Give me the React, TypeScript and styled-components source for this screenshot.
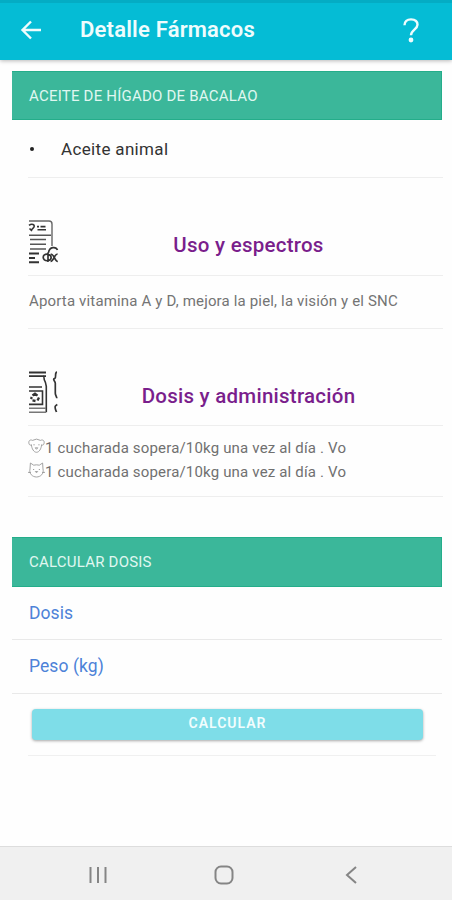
import React from "react";
import styled, { createGlobalStyle } from "styled-components";

const GlobalStyle = createGlobalStyle`
  * { box-sizing: border-box; }
  body { margin: 0; background: #fff; font-family: Roboto, "Liberation Sans", sans-serif; }
`;

const Screen = styled.div`
  width: 452px;
  height: 900px;
  display: flex;
  flex-direction: column;
  background: #fefefe;
  overflow: hidden;
`;

const Header = styled.header`
  height: 60px;
  flex: none;
  display: flex;
  align-items: center;
  padding: 0 32px 4px 20px;
  border-top: 3px solid #04acc4;
  background: #05bcd5;
  box-shadow: 0 1px 4px rgba(0, 0, 0, 0.28);
  color: #effcfd;
`;

const Title = styled.h1`
  flex: 1;
  margin: 0 0 0 38px;
  font-size: 22px;
  line-height: 28px;
  font-weight: 600;
  letter-spacing: 0.2px;
`;

const Content = styled.main`
  flex: 1;
  display: flex;
  flex-direction: column;
  padding: 11px 10px 0 12px;
`;

const Banner = styled.div<{ $tall?: boolean }>`
  height: ${(p) => (p.$tall ? 50 : 49)}px;
  display: flex;
  align-items: center;
  padding-left: 17px;
  border: 1px solid #24ad8a;
  border-left-width: 0;
  background: #3bb79a;
  color: #e0f7f1;
  font-size: 15px;
  letter-spacing: 0.22px;
`;

const Row = styled.div<{ $height: number }>`
  height: ${(p) => p.$height}px;
  margin: 0 -1px 0 16px;
  display: flex;
  align-items: center;
  border-bottom: 1px solid #eeeeee;
`;

const Bullet = styled.span`
  width: 4px;
  height: 4px;
  margin: 0 27px 0 2px;
  border-radius: 50%;
  background: #222;
`;

const DrugType = styled.span`
  color: #333;
  font-size: 17px;
  letter-spacing: 0.34px;
`;

const SectionHead = styled(Row)`
  align-items: flex-start;
  padding-top: 41px;
`;

const SectionTitle = styled.h2`
  flex: 1;
  margin: 12px 6px 0 0;
  text-align: center;
  color: #7a1e8c;
  font-size: 20.5px;
  line-height: 28px;
  font-weight: 500;
  letter-spacing: 0.25px;
`;

const Note = styled.p`
  margin: -2px 0 0 1px;
  color: #747474;
  font-size: 15px;
  letter-spacing: 0.16px;
`;

const DoseList = styled(Row)`
  flex-direction: column;
  align-items: flex-start;
  justify-content: flex-start;
  padding-top: 10px;
`;

const Dose = styled.div`
  height: 24px;
  display: flex;
  align-items: center;
  color: #707070;
  font-size: 15px;
  letter-spacing: 0.17px;
`;

const Calculator = styled.form`
  margin: 40px 0 0;
`;

const Field = styled.label<{ $height: number }>`
  height: ${(p) => p.$height}px;
  display: flex;
  align-items: center;
  padding: 0 0 1px 17px;
  border-bottom: 1px solid #e9e9e9;
  color: #4d82d8;
  font-size: 17.5px;
  letter-spacing: 0.08px;
`;

const ButtonRow = styled.div`
  height: 62px;
  margin: 0 6px 0 16px;
  padding: 15px 13px 0 4px;
  border-bottom: 1px solid #f0f0f0;
`;

const CalculateButton = styled.button`
  display: block;
  width: 100%;
  height: 31px;
  padding: 0 0 3px;
  border: 0;
  border-radius: 4px;
  background: #7edde8;
  box-shadow: 0 1px 3px rgba(0, 0, 0, 0.35);
  color: #f2fdfe;
  font-family: inherit;
  font-size: 14px;
  font-weight: 600;
  letter-spacing: 1px;
`;

const SystemBar = styled.nav`
  height: 54px;
  flex: none;
  display: flex;
  align-items: center;
  padding: 3px 0 0 87px;
  border-top: 1px solid #dddddd;
  background: #f0f0f0;
`;

const Glyph = styled.svg`
  display: block;
  flex: none;
  fill: none;
  stroke: currentColor;
  overflow: visible;
`;

const SystemGlyph = styled(Glyph)<{ $gap: number }>`
  margin-left: ${(p) => p.$gap}px;
  color: #858585;
  stroke-width: 2;
`;

const SectionGlyph = styled(Glyph)`
  color: #333;
  stroke-width: 1.4;
`;

const PetGlyph = styled(Glyph)`
  width: 17px;
  height: 18px;
  margin-top: -4px;
  color: #999;
  stroke-width: 0.9;
`;

const BackIcon = () => (
  <Glyph width="22" height="20" viewBox="0 0 22 20" strokeWidth="2.4">
    <path d="M21 10H3M11 1.5 2.5 10 11 18.5" />
  </Glyph>
);

const HelpIcon = () => (
  <Glyph width="18" height="24" viewBox="0 0 18 24" strokeWidth="2.4">
    <path d="M2.5 7.2C2.5 3.3 5 1.4 9 1.4c4 0 6.5 2 6.5 5.3 0 4.5-6.5 5.5-6.5 10.5" />
    <circle cx="9" cy="22" r="1.2" fill="currentColor" />
  </Glyph>
);

const ReportIcon = () => (
  <SectionGlyph width="32" height="46" viewBox="0 0 32 46">
    <path d="M1 2h20q3 0 3 3v22" stroke="#666" />
    <path d="M1 16.2h22M2 20.5h16M2 25.2h16M2 30h16" stroke="#555" />
    <path d="M1 34.5h10M1 39h6M1 43.2h10" strokeWidth="1.9" />
    <path d="M1 6.4c3-2.4 6-.8 5 1.6-.6 1.5-2.4 1.5-2.8 4M1.5 9.5 4 12M9 7.6h2M12.5 7.6h5M9.5 10.7H18" strokeWidth="1.6" />
    <path d="M29.5 31c-1.5-3.5-8-3.5-9 2.6M20 33.5v9.5M20 35.2c-6.4-1-6.4 7.2 0 6.5 4.2-.3 4.3-6-.2-6.3M22.8 35c3.5 0 3.8 7.5 7 7.5M29.6 35c-3.5 0-3.8 7.5-7 7.5" strokeWidth="1.7" />
  </SectionGlyph>
);

const MedicineIcon = () => (
  <SectionGlyph width="32" height="46" viewBox="0 0 32 46">
    <path d="M1 2.5h17M1 6.2h17" strokeWidth="1.8" />
    <path d="M15.3 6c1.2 0 .3 3.5 1.4 4.8.8 1 1.3 3.7 1.6 5.5v26M1 17h13" strokeWidth="1.6" />
    <path d="M1 21h13.5v13.4H1" strokeWidth="1.6" />
    <path d="M1 38.2h17M1 42.2h17" stroke="#777" />
    <path d="M4.5 25.5 7 23.6l2.5 2M11 27.5l-1.5 3M7.5 31l-3-.6M3 29l.8-2" strokeWidth="2.3" />
    <path d="M29 2.2c-2.8.3-.3 5.2-2.2 6.2-2.8 1 .5 2.8.5 4.8v10c0 2 1.5 3.5 1.5 5M29.3 34.5c-2.5 1.5-2.4 2-2 4.2.2 1.5 1 2.3 1.2 3.3" strokeWidth="1.7" />
  </SectionGlyph>
);

const DogIcon = () => (
  <PetGlyph viewBox="0 0 17 18">
    <path d="M4.5 3.4q4-2.6 8 0c2.8-1.4 4.5 1 3.3 3.8-.5 1-1.5 1.2-2.2.5-.3 4-2.4 7.6-5.1 7.6S3.7 11.7 3.4 7.7c-.7.7-1.7.5-2.2-.5C0 4.4 1.7 2 4.5 3.4M7.2 10.8h2.6l-1.3 1.5zM5.4 7.8h1.3M10.3 7.8h1.3" />
  </PetGlyph>
);

const CatIcon = () => (
  <PetGlyph viewBox="0 0 17 18">
    <path d="M2 8 2.4 2l3.3 2.2q2.8-.8 5.6 0L14.6 2 15 8c1.1 4.5-2.3 8-6.5 8S.9 12.5 2 8zM7.3 10.5h2.4l-1.2 1.3zM5 8.5h1.2M10.8 8.5H12M0 11.3l3 .4M14 11.7l3-.4" />
  </PetGlyph>
);

export default function App() {
  return (
    <Screen>
      <GlobalStyle />
      <Header>
        <BackIcon />
        <Title>Detalle Fármacos</Title>
        <HelpIcon />
      </Header>
      <Content>
        <Banner>ACEITE DE HÍGADO DE BACALAO</Banner>
        <Row $height={58}>
          <Bullet />
          <DrugType>Aceite animal</DrugType>
        </Row>
        <SectionHead $height={98}>
          <ReportIcon />
          <SectionTitle>Uso y espectros</SectionTitle>
        </SectionHead>
        <Row $height={53}>
          <Note>Aporta vitamina A y D, mejora la piel, la visión y el SNC</Note>
        </Row>
        <SectionHead $height={97}>
          <MedicineIcon />
          <SectionTitle>Dosis y administración</SectionTitle>
        </SectionHead>
        <DoseList $height={71}>
          <Dose><DogIcon />1 cucharada sopera/10kg una vez al día . Vo</Dose>
          <Dose><CatIcon />1 cucharada sopera/10kg una vez al día . Vo</Dose>
        </DoseList>
        <Calculator>
          <Banner $tall>CALCULAR DOSIS</Banner>
          <Field $height={53}>Dosis</Field>
          <Field $height={54}>Peso (kg)</Field>
          <ButtonRow>
            <CalculateButton type="button">CALCULAR</CalculateButton>
          </ButtonRow>
        </Calculator>
      </Content>
      <SystemBar>
        <SystemGlyph $gap={0} width="22" height="18" viewBox="0 0 22 18">
          <path d="M3.5 1v16M11 1v16M18.5 1v16" />
        </SystemGlyph>
        <SystemGlyph $gap={105} width="20" height="20" viewBox="0 0 20 20">
          <rect x="1.5" y="1.5" width="17" height="17" rx="5.5" />
        </SystemGlyph>
        <SystemGlyph $gap={111} width="12" height="18" viewBox="0 0 12 18">
          <path d="M11 1 2 9l9 8" />
        </SystemGlyph>
      </SystemBar>
    </Screen>
  );
}
